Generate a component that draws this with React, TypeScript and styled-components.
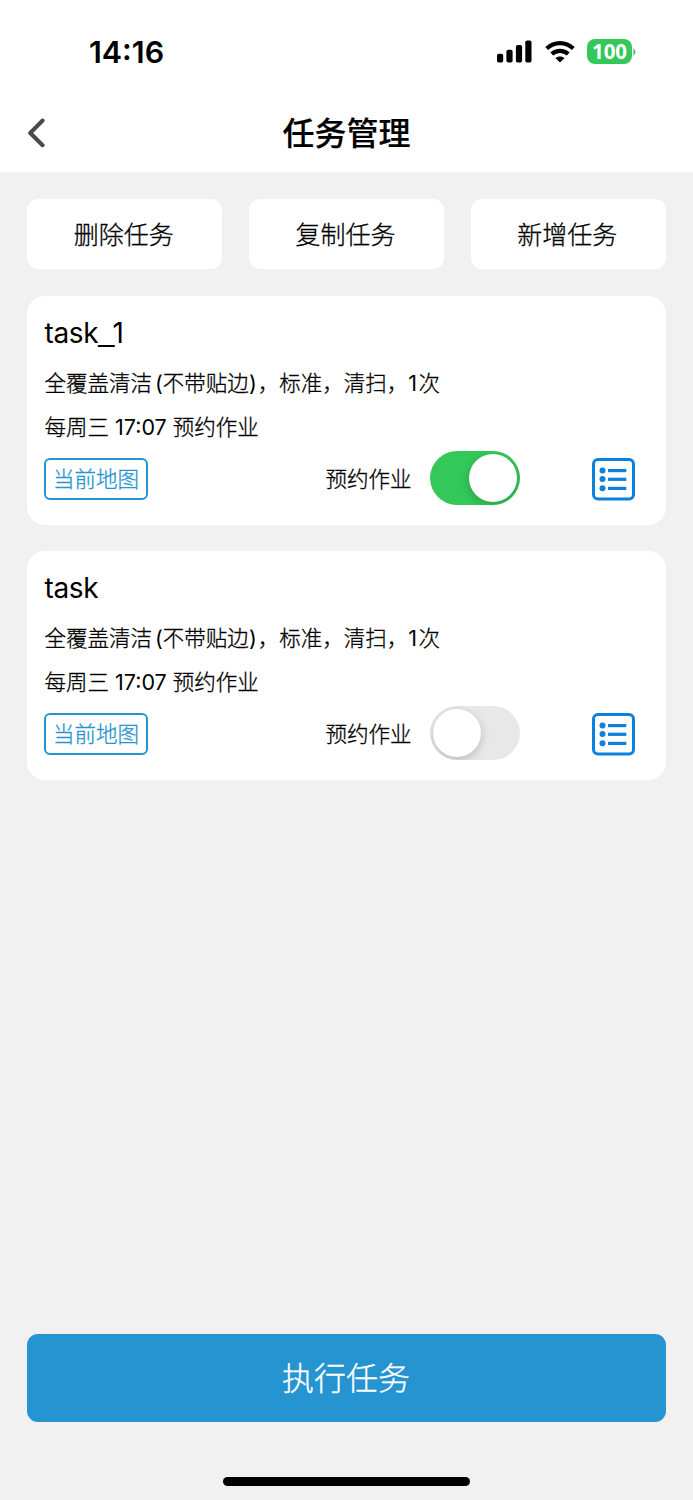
import React, { useState } from 'react';
import styled, { createGlobalStyle, css } from 'styled-components';

const Global = createGlobalStyle`
  * { box-sizing: border-box; }
  body {
    margin: 0;
    background: #f1f1f1;
    color: #000;
    font-family: Inter, 'Noto Sans CJK SC', sans-serif;
  }
  button { font: inherit; color: inherit; border: 0; padding: 0; background: none; }
`;

const bookWeight = css`
  font-weight: 300;
  -webkit-text-stroke: 0.3px currentColor;
`;

const Screen = styled.div`
  width: 693px;
  height: 1500px;
  display: flex;
  flex-direction: column;
  overflow: hidden;
`;

const StatusBar = styled.div`
  height: 94px;
  padding: 9px 57px 0 89px;
  background: #fff;
  display: flex;
  align-items: center;
  justify-content: space-between;
`;

const Clock = styled.div`
  font-size: 30.4px;
  font-weight: 600;
  line-height: 36px;
`;

const StatusIcons = styled.div`
  display: flex;
  align-items: center;
  gap: 12.5px;
`;

const Battery = styled.div`
  display: flex;
  align-items: center;
  gap: 1px;
`;

const BatteryBody = styled.div`
  width: 45px;
  height: 25px;
  border-radius: 8px;
  background: #34c759;
  color: #fff;
  font-family: 'Noto Sans', sans-serif;
  font-size: 20.5px;
  font-weight: 700;
  line-height: 25px;
  text-align: center;
`;

const NavBar = styled.header`
  height: 78px;
  padding: 0 27px;
  background: #fff;
  display: grid;
  grid-template-columns: 60px 1fr 60px;
  align-items: center;
`;

const BackButton = styled.button`
  display: flex;
`;

const Title = styled.h1`
  margin: 0;
  padding-top: 2px;
  font-size: 32px;
  font-weight: 500;
  -webkit-text-stroke: 0.2px #000;
  line-height: 44px;
  text-align: center;
`;

const Content = styled.main`
  flex: 1;
  padding: 27px 27px 0;
  display: flex;
  flex-direction: column;
`;

const Actions = styled.div`
  display: flex;
  gap: 26.5px;
  margin-bottom: 27px;
`;

const ActionButton = styled.button`
  flex: 1;
  height: 70px;
  padding: 2px 2px 0 0;
  border-radius: 11px;
  background: #fff;
  font-size: 25px;
  line-height: 36px;
  ${bookWeight}
`;

const Card = styled.section`
  height: 228.5px;
  margin-bottom: 26.5px;
  padding: 18px 31px 0 17px;
  border-radius: 18px;
  background: #fff;
`;

const TaskName = styled.h2`
  margin: 0 0 11px;
  height: 38px;
  padding-left: 0.5px;
  font-size: 28px;
  font-weight: 400;
  letter-spacing: -0.35px;
  line-height: 38px;
`;

const Underscore = styled.span`
  font-family: 'Liberation Sans', sans-serif;
  font-size: 29px;
  line-height: 1;
  vertical-align: 2px;
  margin-right: -1.5px;
`;

const Detail = styled.p`
  margin: 0 0 4px;
  height: 40px;
  padding-left: 0.5px;
  font-size: 21.5px;
  line-height: 40px;
  white-space: nowrap;
  ${bookWeight}
`;

const Latin = styled.span`
  font-weight: 400;
  -webkit-text-stroke: 0;
`;

const Paren = styled(Latin)<{ $open?: boolean }>`
  padding-left: ${p => (p.$open ? '3px' : '0')};
  padding-right: ${p => (p.$open ? '0' : '1px')};
`;

const Count = styled(Latin)`
  padding: 0 1.5px 0 0;
`;

const CardFooter = styled.div`
  height: 56px;
  display: flex;
  align-items: center;
`;

const MapTag = styled.span`
  width: 104px;
  height: 42px;
  border: 2px solid #2594d0;
  border-radius: 6px;
  color: #2594d0;
  font-size: 21.5px;
  line-height: 39px;
  text-align: center;
  ${bookWeight}
`;

const SwitchLabel = styled.span`
  margin: 0 18.5px 1px auto;
  font-size: 21.5px;
  line-height: 32px;
  ${bookWeight}
`;

const Switch = styled.button<{ $on: boolean }>`
  width: 90px;
  height: 54px;
  margin: 0 72px 2px 0;
  padding: 3px;
  border-radius: 27px;
  overflow: hidden;
  background: ${p => (p.$on ? '#34c759' : '#e8e8e8')};
  display: flex;
  justify-content: ${p => (p.$on ? 'flex-end' : 'flex-start')};
`;

const Knob = styled.span`
  width: 48px;
  height: 48px;
  border-radius: 50%;
  background: #fff;
  box-shadow: 0 3px 10px rgba(0, 0, 0, 0.2);
`;

const ListButton = styled.button`
  display: flex;
`;

const RunButton = styled.button`
  height: 88px;
  margin-top: auto;
  padding: 2px 1px 0 0;
  border-radius: 11px;
  background: #2594d0;
  color: #fff;
  font-size: 32px;
  line-height: 44px;
  ${bookWeight}
`;

const HomeArea = styled.div`
  height: 78px;
  display: flex;
  justify-content: center;
  padding-top: 55px;
`;

const HomeIndicator = styled.div`
  width: 247px;
  height: 8.5px;
  border-radius: 5px;
  background: #000;
`;

const SignalIcon = () => (
  <svg width="35" height="23" viewBox="0 0 35 23">
    <rect x="0" y="13.8" width="6.2" height="8.7" rx="1.8" />
    <rect x="9.4" y="9.8" width="6.2" height="12.7" rx="1.8" />
    <rect x="18.9" y="5" width="6.2" height="17.5" rx="1.8" />
    <rect x="28.3" y="0.5" width="6.2" height="22" rx="1.8" />
  </svg>
);

const WifiIcon = () => (
  <svg width="30" height="22" viewBox="0 0 30 22">
    <g fill="none" stroke="#000" strokeWidth="4.2">
      <path d="M1.7 7.6 C9.2 .3 20.8 .3 28.3 7.6" />
      <path d="M6.8 13 C11.5 8.7 18.5 8.7 23.2 13" />
    </g>
    <path d="M15 21.6 L10.4 17.1 C13 14.8 17 14.8 19.6 17.1 Z" />
  </svg>
);

const BackIcon = () => (
  <svg width="18" height="30" viewBox="0 0 18 30" fill="none" stroke="#4a4a4a" strokeWidth="4" strokeLinecap="round" strokeLinejoin="round">
    <path d="M15.6 2.5 L3.2 15 L15.6 27.2" />
  </svg>
);

const ListIcon = () => (
  <svg width="43" height="43" viewBox="0 0 43 43" fill="#0b80dc">
    <rect x="1.5" y="1.5" width="40" height="39.5" rx="4.5" fill="none" stroke="#0b80dc" strokeWidth="3" />
    <circle cx="10.5" cy="12.6" r="3" />
    <circle cx="10.5" cy="21" r="3" />
    <circle cx="10.5" cy="30.3" r="3" />
    <rect x="16" y="11" width="18.3" height="3.2" />
    <rect x="16" y="19.7" width="18.3" height="3.2" />
    <rect x="16" y="28.8" width="18.3" height="3.2" />
  </svg>
);

function TaskCard({ name, scheduled }: { name: string; scheduled: boolean }) {
  const [on, setOn] = useState(scheduled);
  const parts = name.split('_');
  return (
    <Card>
      <TaskName>
        {parts[0]}
        {parts.length > 1 && <><Underscore>_</Underscore>{parts[1]}</>}
      </TaskName>
      <Detail>
        全覆盖清洁<Paren $open>(</Paren>不带贴边<Paren>)</Paren>
        {['', '标准', '清扫', ''].join('\uFF0C')}<Count>1</Count>次
      </Detail>
      <Detail>每周三 <Latin>17:07</Latin> 预约作业</Detail>
      <CardFooter>
        <MapTag>当前地图</MapTag>
        <SwitchLabel>预约作业</SwitchLabel>
        <Switch $on={on} onClick={() => setOn(!on)} role="switch" aria-checked={on}>
          <Knob />
        </Switch>
        <ListButton><ListIcon /></ListButton>
      </CardFooter>
    </Card>
  );
}

export default function App() {
  return (
    <Screen>
      <Global />
      <StatusBar>
        <Clock>14:16</Clock>
        <StatusIcons>
          <SignalIcon />
          <WifiIcon />
          <Battery>
            <BatteryBody>100</BatteryBody>
            <svg width="3" height="8" viewBox="0 0 3 8"><path d="M0.5 0 Q4.5 4 0.5 8 Z" fill="#34c759" /></svg>
          </Battery>
        </StatusIcons>
      </StatusBar>
      <NavBar>
        <BackButton><BackIcon /></BackButton>
        <Title>任务管理</Title>
      </NavBar>
      <Content>
        <Actions>
          <ActionButton>删除任务</ActionButton>
          <ActionButton>复制任务</ActionButton>
          <ActionButton>新增任务</ActionButton>
        </Actions>
        <TaskCard name="task_1" scheduled />
        <TaskCard name="task" scheduled={false} />
        <RunButton>执行任务</RunButton>
      </Content>
      <HomeArea>
        <HomeIndicator />
      </HomeArea>
    </Screen>
  );
}
